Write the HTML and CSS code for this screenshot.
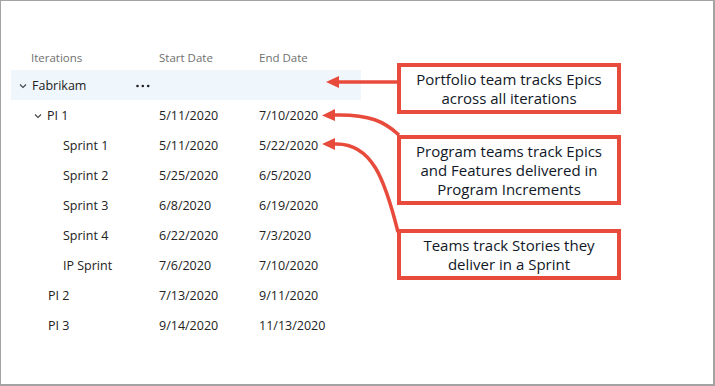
FILE: index.html
```html
<!DOCTYPE html>
<html>
<head>
<meta charset="utf-8">
<link rel="stylesheet" href="styles.css">
</head>
<body>
<div class="frame">
  <div class="table">
    <div class="row head">
      <div class="name">Iterations</div>
      <div class="cell">Start Date</div>
      <div class="cell">End Date</div>
    </div>
    <div class="row selected">
      <div class="name lvl0"><svg class="chev" width="8" height="6" viewBox="0 0 8 6"><polyline points="1,1.5 4,4.5 7,1.5" fill="none" stroke="#444" stroke-width="1.1"/></svg>Fabrikam<svg class="more" width="14" height="4" viewBox="0 0 14 4"><circle cx="1.5" cy="2" r="1.3" fill="#222"/><circle cx="6.8" cy="2" r="1.3" fill="#222"/><circle cx="12.2" cy="2" r="1.3" fill="#222"/></svg></div>
      <div class="cell"></div>
      <div class="cell"></div>
    </div>
    <div class="row">
      <div class="name lvl1"><svg class="chev" width="8" height="6" viewBox="0 0 8 6"><polyline points="1,1.5 4,4.5 7,1.5" fill="none" stroke="#444" stroke-width="1.1"/></svg>PI 1</div>
      <div class="cell">5/11/2020</div>
      <div class="cell">7/10/2020</div>
    </div>
    <div class="row">
      <div class="name lvl2">Sprint 1</div>
      <div class="cell">5/11/2020</div>
      <div class="cell">5/22/2020</div>
    </div>
    <div class="row">
      <div class="name lvl2">Sprint 2</div>
      <div class="cell">5/25/2020</div>
      <div class="cell">6/5/2020</div>
    </div>
    <div class="row">
      <div class="name lvl2">Sprint 3</div>
      <div class="cell">6/8/2020</div>
      <div class="cell">6/19/2020</div>
    </div>
    <div class="row">
      <div class="name lvl2">Sprint 4</div>
      <div class="cell">6/22/2020</div>
      <div class="cell">7/3/2020</div>
    </div>
    <div class="row">
      <div class="name lvl2">IP Sprint</div>
      <div class="cell">7/6/2020</div>
      <div class="cell">7/10/2020</div>
    </div>
    <div class="row">
      <div class="name lvl1b">PI 2</div>
      <div class="cell">7/13/2020</div>
      <div class="cell">9/11/2020</div>
    </div>
    <div class="row">
      <div class="name lvl1b">PI 3</div>
      <div class="cell">9/14/2020</div>
      <div class="cell">11/13/2020</div>
    </div>
  </div>
  <div class="callouts">
    <div class="callout c1">Portfolio team tracks Epics<br>across all iterations</div>
    <div class="callout c2">Program teams track Epics<br>and Features delivered in<br>Program Increments</div>
    <div class="callout c3">Teams track Stories they<br>deliver in a Sprint</div>
  </div>
  <svg class="arrows" width="715" height="386" viewBox="0 0 715 386">
    <g fill="none" stroke="#e84b3c" stroke-width="3.5">
      <path d="M398 82 L336 82"/>
      <path d="M399 135 C385 122 370 114 334 115"/>
      <path d="M398 232 C385 180 372 142 334 144"/>
    </g>
    <g fill="#e84b3c">
      <polygon points="326,82 339,76 339,88"/>
      <polygon points="322,115.5 335,109 335,121"/>
      <polygon points="322,144 335,138 335,150"/>
    </g>
  </svg>
</div>
</body>
</html>
```
FILE: styles.css
```css
html, body {
  margin: 0;
  padding: 0;
  background: #fff;
}
.frame {
  position: relative;
  width: 715px;
  height: 386px;
  box-sizing: border-box;
  border: 1px solid #a3a3a3;
  border-right-width: 2px;
  border-bottom-width: 2px;
  display: flex;
  font-family: "Open Sans", "Noto Sans", sans-serif;
}
.table {
  margin-left: 10px;
  padding-top: 41px;
  width: 350px;
  font-size: 12.5px;
  color: #222;
}
.row {
  display: grid;
  grid-template-columns: 148px 100px 102px;
  height: 30px;
  line-height: 29px;
  white-space: nowrap;
}
.row > div {
  padding-top: 1px;
}
.row.head {
  height: 28px;
  line-height: 29px;
  color: #707070;
  font-size: 11.5px;
}
.row.selected {
  background: #eff6fc;
}
.name {
  display: flex;
  align-items: center;
  padding-left: 20px;
}
.name.lvl0 { padding-left: 8px; }
.name.lvl1 { padding-left: 23px; }
.name.lvl1b { padding-left: 37px; }
.name.lvl2 { padding-left: 52px; }
.chev {
  margin-right: 5px;
}
.more {
  margin-left: 50px;
}
.callouts {
  margin-left: 36px;
  padding-top: 62px;
  display: flex;
  flex-direction: column;
  width: 224px;
}
.callout {
  box-sizing: border-box;
  width: 224px;
  border: 4px solid #e84b3c;
  text-align: center;
  font-size: 15px;
  line-height: 19px;
  color: #111827;
  padding-top: 3px;
  white-space: nowrap;
}
.c1 { height: 51px; }
.c2 { height: 70px; margin-top: 21px; }
.c3 { height: 51px; margin-top: 24px; }
.arrows {
  position: absolute;
  left: -1px;
  top: -1px;
  pointer-events: none;
}
```
